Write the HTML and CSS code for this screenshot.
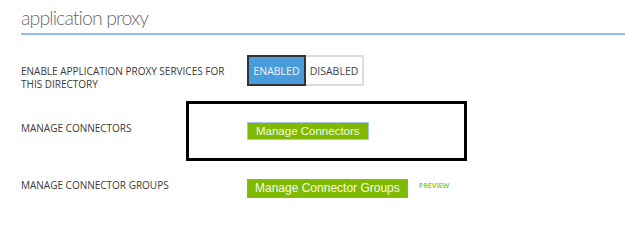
FILE: index.html
```html
<!DOCTYPE html>
<html><head>
    <meta charset="UTF-8">
    <title>application proxy</title>
    <link rel="stylesheet" href="styles.css">
</head>
<body>
    <div class="page">
        <h1 class="page-title">application proxy</h1>
        <div class="setting setting-toggle">
            <div class="setting-label">Enable application proxy services for this directory</div>
            <div class="toggle">
                <span class="toggle-opt active">ENABLED</span>
                <span class="toggle-opt">DISABLED</span>
            </div>
        </div>
        <div class="setting setting-connectors">
            <div class="setting-label">Manage connectors</div>
            <div class="control">
                <button class="green-btn focused">Manage Connectors</button>
            </div>
        </div>
        <div class="setting setting-groups">
            <div class="setting-label">Manage connector groups</div>
            <div class="control">
                <button class="green-btn">Manage Connector Groups</button>
                <span class="preview">PREVIEW</span>
            </div>
        </div>
        <div class="footer-line"><span class="footer-mark"></span></div>
        <!-- highlight box drawn over the screenshot -->
        <div class="highlight"></div>
    </div>
</body>
</html>
```

FILE: styles.css
```css
body {
    margin: 0;
    padding: 0;
    background-color: #fff;
    font-family: 'Open Sans', 'Noto Sans', sans-serif;
    color: #333;
}
.page {
    position: relative;
    height: 233px;
    padding-left: 21px;
    overflow: hidden;
}
.page-title {
    margin: 0;
    padding-top: 3px;
    font-family: 'Lato', 'Open Sans', sans-serif;
    font-size: 19.5px;
    font-weight: 300;
    letter-spacing: -0.9px;
    line-height: 30px;
    color: #6b6b6b;
    border-bottom: 2px solid #92bde8;
}
.setting {
    display: grid;
    grid-template-columns: 226px auto;
    align-items: start;
}
.setting-label {
    font-size: 10px;
    line-height: 13px;
    text-transform: uppercase;
    color: #3a3a3a;
}
.setting-toggle {
    margin-top: 20px;
}
.setting-toggle .setting-label {
    padding-top: 10px;
    width: 215px;
}
.toggle {
    display: flex;
    width: 117px;
    height: 31px;
    box-sizing: border-box;
    border: 2px solid #dcdcdc;
}
.toggle-opt {
    display: flex;
    align-items: center;
    justify-content: center;
    width: 58px;
    font-size: 10.5px;
    color: #444;
}
.toggle-opt.active {
    width: 57px;
    margin: -2px 0 -2px -2px;
    background-color: #4a9bd9;
    border: 2px solid #333;
    color: #eef5fc;
}
.setting-connectors {
    margin-top: 31px;
}
.setting-groups {
    margin-top: 39px;
}
.control {
    display: flex;
    align-items: flex-start;
}
.green-btn {
    margin: 0;
    padding: 0 7px;
    height: 19px;
    background-color: #7fba00;
    border: 1px solid #9a9a9a;
    font-family: 'Liberation Sans', Arial, sans-serif;
    font-size: 12px;
    color: #f6faea;
    line-height: 17px;
}
.green-btn.focused {
    height: 18px;
    padding: 0 8px;
    border-color: #a9c1ee;
    font-size: 11.5px;
    line-height: 16px;
}
.preview {
    margin-left: 11px;
    margin-top: 2px;
    font-size: 7px;
    font-weight: 700;
    color: #8fcf4a;
}
.footer-line {
    position: relative;
    margin-top: 37px;
    height: 1px;
    background-color: #e2e2e2;
}
.footer-mark {
    display: block;
    width: 5px;
    height: 1px;
    background-color: #e3a04a;
}
.highlight {
    position: absolute;
    left: 186px;
    top: 101px;
    width: 281px;
    height: 60px;
    box-sizing: border-box;
    border: 3px solid #000;
}
```
